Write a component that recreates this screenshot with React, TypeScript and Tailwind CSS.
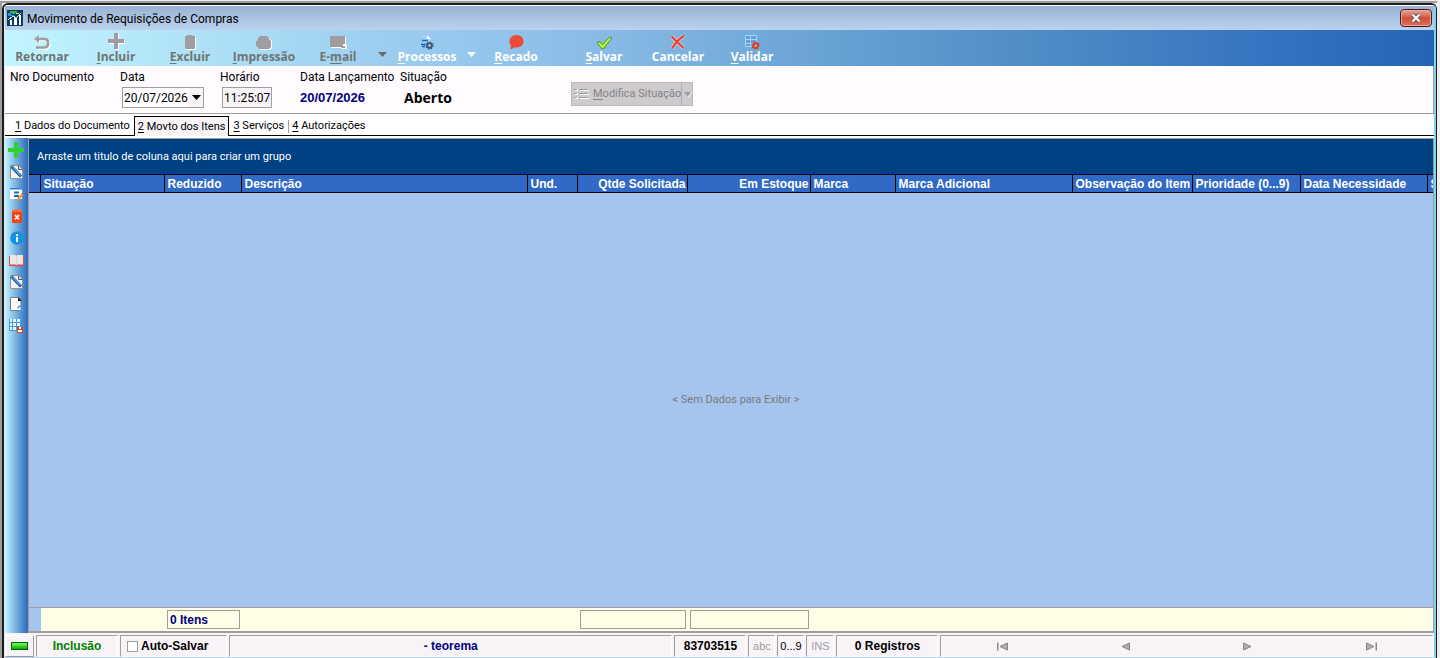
import { useState } from "react";
import type { ReactNode } from "react";
import clsx from "clsx";

const SANS = "font-['Liberation_Sans',Arial,sans-serif]";
const NARROW = "font-['Roboto','Liberation_Sans',sans-serif]";
const HUMANIST = "font-['Open_Sans','Noto_Sans',sans-serif]";

// --- Icons ---

const AppIcon = () => (
  <svg width="16" height="16" viewBox="0 0 16 16" shapeRendering="crispEdges">
    <rect width="16" height="16" fill="#0b3a63" />
    <path d="M3 1h7v2H8v1H5V3H3z" fill="#2fb84a" />
    <path d="M1 3h3v2h3v1H1z" fill="#2a8fe0" />
    <path d="M9 3h3v1H9z" fill="#e8e23a" />
    <path d="M3 10h2v5H3zM7 8h3v7H7zM12 5h2v10h-2z" fill="#fff" />
    <path d="M1 10l5-4 3 2 5-5" stroke="#cfe6f7" fill="none" />
  </svg>
);

const ReturnIcon = () => (
  <svg width="18" height="15" viewBox="0 0 18 15">
    <g transform="translate(1 1)">
      <path d="M6 0v8L1 4z" fill="#fff" />
      <path d="M1 4h11c4 0 4.500 8 0 8.500H4" fill="none" stroke="#fff" strokeWidth="2.600" />
    </g>
    <path d="M6 0v8L1 4z" fill="#a09da1" />
    <path d="M3 4h9c4 0 4.500 8 0 8.500H3" fill="none" stroke="#a09da1" strokeWidth="2.600" />
  </svg>
);

const PlusShape = ({ color, shadow }: { color: string; shadow?: boolean }) => (
  <svg width="17" height="17" viewBox="0 0 17 17" shapeRendering="crispEdges">
    {shadow && <path d="M7 1h4v6h6v4h-6v6H7v-6H1V7h6z" fill="#fff" />}
    <path d="M6 0h4v6h6v4h-6v6H6v-6H0V6h6z" fill={color} />
  </svg>
);

const TrashIcon = () => (
  <svg width="12" height="15" viewBox="0 0 12 15">
    <path d="M4 1h6l1 1 1 1v11l-1 1H3l-1-1V2z" fill="#fff" />
    <path d="M3 0h5l1 1h2v12l-1 1H2l-1-1V1h2z" fill="#a09da1" />
  </svg>
);

const PrinterIcon = () => (
  <svg width="16" height="14" viewBox="0 0 16 14">
    <path d="M5 1h7l2 2 2 2v7l-2 2H4z" fill="#fff" />
    <path d="M4 0h7l2 2v1l2 2v6l-2 2H3l-1-2H1L0 9V6l2-3V2z" fill="#a09da1" />
  </svg>
);

const MailIcon = () => (
  <svg width="17" height="14" viewBox="0 0 17 14">
    <path d="M1 1h15v8l1 1v3h-5l-1-1H1z" fill="#fff" />
    <path d="M0 0h15v8h-2v2h2v2h-3l-1-1H0z" fill="#a09da1" />
  </svg>
);

const Gear = ({ color }: { color: string }) => (
  <g>
    <circle cx="0" cy="0" r="2.300" fill="none" stroke={color} strokeWidth="1.800" />
    <circle cx="0" cy="0" r="3.500" fill="none" stroke={color} strokeWidth="1.300" strokeDasharray="1.400 1.350" />
  </g>
);

const ProcessIcon = () => (
  <svg width="14" height="15" viewBox="0 0 14 15">
    <path d="M3 0h4v4h4v4H3z" fill="#9fd0ff" />
    <path d="M7 0l4 4H7z" fill="#fff" />
    <path d="M2 5.500h6M1 9.500h5M2 11.500h3" stroke="#1668c4" strokeWidth="1.400" />
    <g transform="translate(9.500 10.500)"><Gear color="#44556a" /></g>
  </svg>
);

const BalloonIcon = () => (
  <svg width="15" height="15" viewBox="0 0 15 15">
    <path d="M7.500 0c4.200 0 7 2.800 7 6.300s-2.800 6.200-7 6.200c-.9 0-1.600-.1-2.300-.3C4.200 13.200 3 14 1 14c.8-1 1-2.300.9-3.500C.9 9.300.5 7.900.5 6.300.5 2.800 3.300 0 7.500 0z" fill="#e84b38" />
  </svg>
);

const CheckIcon = () => (
  <svg width="17" height="14" viewBox="0 0 17 14">
    <path d="M1 6.500l3-1 2.500 3L13.500 1l2.500.5L8 12.500H5.500z" fill="#9be31a" stroke="#4f9f27" />
    <path d="M3 7l3 4L14.500 2" stroke="#d9ff8a" fill="none" />
  </svg>
);

const CrossIcon = () => (
  <svg width="16" height="15" viewBox="0 0 16 15">
    <path d="M1.500 1.500l12 11.500M14 .8Q7 5 2 13.500" stroke="#fff" strokeWidth="3.600" fill="none" opacity=".6" />
    <path d="M1.500 1.500l12 11.500M14 .8Q7 5 2 13.500" stroke="#f03a28" strokeWidth="2.300" fill="none" />
  </svg>
);

const ValidateIcon = () => (
  <svg width="15" height="15" viewBox="0 0 15 15">
    <rect x="1" y="1" width="11" height="11" fill="#5f9fe0" />
    <path d="M.5.5h11v11H.5zM5.500.5v11M.5 4.500h11M.5 8.500h11" fill="none" stroke="#a3d4ff" />
    <g transform="translate(10.500 10.500)"><Gear color="#e8381c" /></g>
  </svg>
);

const NoteIcon = () => (
  <svg width="13" height="14" viewBox="0 0 13 14">
    <path d="M.5.5h8l4 4v9H.5z" fill="#f4f4f2" stroke="#8d9199" />
    <path d="M8.500.5v4h4" fill="#d4d8de" stroke="#55585e" />
    <path d="M1.500 1.500l9.500 10" stroke="#1d4f96" strokeWidth="3" />
    <path d="M2.500 2l8 8.500" stroke="#5aa8f2" strokeWidth="1.200" />
  </svg>
);

const EditFormIcon = () => (
  <svg width="14" height="13" viewBox="0 0 14 13">
    <path d="M0 0h12v11H0z" fill="#fff" />
    <path d="M0 0h12v1.500H0z" fill="#2f7fdd" />
    <path d="M4 4.500h5M4 8h5" stroke="#2264b8" strokeWidth="1.800" />
    <path d="M13 6l-6 6.500" stroke="#f0932b" strokeWidth="2.200" />
    <path d="M12 5l1.500 1.500" stroke="#e84b38" strokeWidth="1.500" />
  </svg>
);

const RedTrashIcon = () => (
  <svg width="10" height="14" viewBox="0 0 10 14">
    <path d="M3 0h4v1h3v2H0V1h3z" fill="#ff6a3c" />
    <path d="M0 3h10v10l-1 1H1l-1-1z" fill="#f24412" />
    <path d="M3 6l4 4.500M7 6l-4 4.500" stroke="#fff" strokeWidth="1.600" />
  </svg>
);

const InfoIcon = () => (
  <svg width="14" height="14" viewBox="0 0 14 14">
    <circle cx="7" cy="7" r="6.800" fill="#1292e0" />
    <path d="M6 3h2v2H6zM6 6h2v5H6z" fill="#fff" />
  </svg>
);

const BookIcon = () => (
  <svg width="15" height="13" viewBox="0 0 15 13">
    <path d="M0 2h15v10H8.500l-1 1-1-1H0z" fill="#e04a42" />
    <path d="M1 1h5.500l1 1 1-1H14v9.500H8.500l-1 1-1-1H1z" fill="#ece6e8" />
    <path d="M7.500 2v9" stroke="#ddd4d8" />
  </svg>
);

const PageRefreshIcon = () => (
  <svg width="14" height="15" viewBox="0 0 14 15">
    <path d="M.5.5h8l2.500 3v10H.5z" fill="#fff" stroke="#7b7b7b" />
    <path d="M8 0v4h4L8.500.5z" fill="#222" />
    <path d="M8 11.500a2.500 2.500 0 0 1 4-2M13 11.500a2.500 2.500 0 0 1-4 2" fill="none" stroke="#4f9fe0" strokeWidth="1.700" />
  </svg>
);

const TableSaveIcon = () => (
  <svg width="15" height="14" viewBox="0 0 15 14" shapeRendering="crispEdges">
    <path d="M0 0h12v12H0z" fill="#eaf5ff" />
    <path d="M3 0h1v12H3zM7 0h1v12H7zM0 3h12v1H0zM0 7h12v1H0zM0 11h12v1H0zM11 0h1v12h-1zM0 0h1v12H0z" fill="#3d9be4" />
    <path d="M8 8h6v6H8z" fill="#ea3d1a" />
    <path d="M10 8h2v2h-2zM9 11h4v2H9z" fill="#fff" />
  </svg>
);

const ListIcon = () => (
  <svg width="15" height="12" viewBox="0 0 15 12" shapeRendering="crispEdges">
    <path d="M1 1h3v2H1zM1 5h3v2H1zM1 9h3v2H1zM6 2h9v1H6zM6 6h9v1H6zM6 10h9v1H6z" fill="#fff" />
    <path d="M0 1h3v1H0zM0 5h3v1H0zM0 9h3v1H0zM5 1h9v1H5zM5 5h9v1H5zM5 9h9v1H5z" fill="#a09da1" />
  </svg>
);

const Caret = ({ color }: { color: string }) => (
  <svg width="9" height="5" viewBox="0 0 9 5">
    <path d="M0 0h9L4.500 5z" fill={color} />
  </svg>
);

const NavIcon = ({ flip, bar }: { flip?: boolean; bar?: boolean }) => (
  <svg width="12" height="9" viewBox="0 0 12 9" className={flip ? "-scale-x-100" : undefined}>
    {bar && <path d="M0 .5h1.500v8H0z" fill="#8a878b" />}
    <path d="M10.500 1v7L3 4.500z" fill="#b0aeb1" stroke="#858286" />
  </svg>
);

// --- Data ---

type ToolItem = {
  label: string;
  hotkey?: number;
  icon: ReactNode;
  disabled?: boolean;
  menu?: boolean;
};

const mainTools: ToolItem[] = [
  { label: "Retornar", icon: <ReturnIcon />, disabled: true },
  { label: "Incluir", hotkey: 0, icon: <PlusShape color="#a09da1" shadow />, disabled: true },
  { label: "Excluir", hotkey: 0, icon: <TrashIcon />, disabled: true },
  { label: "Impressão", hotkey: 0, icon: <PrinterIcon />, disabled: true },
  { label: "E-mail", hotkey: 2, icon: <MailIcon />, disabled: true, menu: true },
  { label: "Processos", hotkey: 0, icon: <ProcessIcon />, menu: true },
  { label: "Recado", hotkey: 0, icon: <BalloonIcon /> },
];

const saveTools: ToolItem[] = [
  { label: "Salvar", hotkey: 0, icon: <CheckIcon /> },
  { label: "Cancelar", icon: <CrossIcon /> },
  { label: "Validar", hotkey: 0, icon: <ValidateIcon /> },
];

const tabs = ["1 Dados do Documento", "2 Movto dos Itens", "3 Serviços", "4 Autorizações"];

const sideTools = [
  { label: "Incluir item", icon: <PlusShape color="#2ed12e" /> },
  { label: "Observação", icon: <NoteIcon /> },
  { label: "Alterar item", icon: <EditFormIcon /> },
  { label: "Excluir item", icon: <RedTrashIcon /> },
  { label: "Informações", icon: <InfoIcon /> },
  { label: "Catálogo", icon: <BookIcon /> },
  { label: "Anotações", icon: <NoteIcon /> },
  { label: "Atualizar", icon: <PageRefreshIcon /> },
  { label: "Salvar layout", icon: <TableSaveIcon /> },
];

const columns = [
  { title: "", width: "w-[11px]" },
  { title: "Situação", width: "w-[124px]" },
  { title: "Reduzido", width: "w-[77px]" },
  { title: "Descrição", width: "w-[286px]" },
  { title: "Und.", width: "w-[50px]" },
  { title: "Qtde Solicitada", width: "w-[110px]", right: true },
  { title: "Em Estoque", width: "w-[123px]", right: true },
  { title: "Marca", width: "w-[85px]" },
  { title: "Marca Adicional", width: "w-[177px]" },
  { title: "Observação do Item", width: "w-[120px]" },
  { title: "Prioridade (0...9)", width: "w-[108px]" },
  { title: "Data Necessidade", width: "w-[127px]" },
  { title: "S", width: "" },
];

// --- Pieces ---

const HotLabel = ({ text, at }: { text: string; at?: number }) =>
  at === undefined ? (
    <span>{text}</span>
  ) : (
    <span>
      {text.slice(0, at)}
      <span className="underline underline-offset-2">{text[at]}</span>
      {text.slice(at + 1)}
    </span>
  );

function ToolButton({ item }: { item: ToolItem }) {
  return (
    <>
      <button
        type="button"
        disabled={item.disabled}
        className={clsx(
          "flex h-9 w-[74px] shrink-0 flex-col items-center text-xs leading-[14px] font-bold",
          item.disabled ? "text-[#6f7472]" : "text-white"
        )}
      >
        <span className="flex h-5 items-end justify-center">{item.icon}</span>
        <HotLabel text={item.label} at={item.hotkey} />
      </button>
      {item.menu && (
        <button
          type="button"
          aria-label={`Opções de ${item.label}`}
          disabled={item.disabled}
          className="flex h-9 w-[15px] shrink-0 items-center justify-center pt-3"
        >
          <Caret color={item.disabled ? "#6f6c66" : "#ffffff"} />
        </button>
      )}
    </>
  );
}

function StatusPanel({ className, children }: { className?: string; children?: ReactNode }) {
  return (
    <div
      className={clsx(
        "flex shrink-0 items-center border border-t-[#a09da1] border-r-white border-b-white border-l-[#a09da1]",
        className
      )}
    >
      {children}
    </div>
  );
}

export default function App() {
  const [activeTab, setActiveTab] = useState(1);
  const [date, setDate] = useState("20/07/2026");
  const [time, setTime] = useState("11:25:07");
  const [autoSave, setAutoSave] = useState(false);

  return (
    <div className={clsx("flex min-h-screen flex-col bg-[#f0edf0] pt-px pr-[3px] text-black", SANS)}>
      <div className="flex flex-1 flex-col border-t-2 border-l-2 border-[#a09da1]">
        <div className="flex flex-1 flex-col rounded-t-md border-t-2 border-r border-l-2 border-[#1c1c1c] bg-white">
          <div className="flex flex-1 flex-col rounded-t border-t border-r-2 border-b border-l border-t-white border-r-[#7fd3f2] border-b-[#b8d4f0] border-l-[#dcecf8]">
            {/* Title bar */}
            <header className="flex h-6 items-center gap-1 bg-linear-to-b from-[#98b3d2] to-[#bcd2ee] pl-0.5">
              <AppIcon />
              <h1 className={clsx("flex-1 pt-px text-xs", NARROW)}>Movimento de Requisições de Compras</h1>
              <button
                type="button"
                aria-label="Fechar"
                className="mr-0.5 flex h-[18px] w-8 items-center justify-center rounded-sm border border-[#4b1520] bg-linear-to-b from-[#eba79b] via-[#cf5238] via-50% to-[#d8705a] inset-ring inset-ring-[#e9a89c]"
              >
                <svg width="12" height="10" viewBox="0 0 12 10">
                  <path d="M2.500 1.500l7 7M9.500 1.500l-7 7" stroke="#5c4a5c" strokeWidth="4" />
                  <path d="M2.500 1.500l7 7M9.500 1.500l-7 7" stroke="#fff" strokeWidth="2.400" />
                </svg>
              </button>
            </header>

            {/* Toolbar */}
            <div
              role="toolbar"
              className={clsx(
                "flex h-9 items-start overflow-hidden bg-[linear-gradient(to_right,#c2f5ff,#9ccdf0_27%,#8cbde7_40%,#6fa8d8_54%,#4a88c4_75%,#3574c0_88%,#2464b4)]",
                HUMANIST
              )}
            >
              {mainTools.map((t) => (
                <ToolButton key={t.label} item={t} />
              ))}
              <div className="w-3.5 shrink-0" />
              {saveTools.map((t) => (
                <ToolButton key={t.label} item={t} />
              ))}
            </div>

            {/* Document header */}
            <form
              className={clsx(
                "flex h-12 items-start border-r border-b border-[#a09da1] bg-[#fffbff] pt-1 pl-[5px] text-xs leading-[14px]",
                NARROW
              )}
            >
              <div className="w-[110px]">Nro Documento</div>
              <div className="flex w-[100px] flex-col gap-[3px]">
                <label htmlFor="data">Data</label>
                <div className="ml-0.5 flex h-[21px] w-[82px] border border-[#a09da1] bg-white">
                  <input
                    id="data"
                    value={date}
                    onChange={(e) => setDate(e.target.value)}
                    className="w-[66px] pl-px outline-none"
                  />
                  <button
                    type="button"
                    aria-label="Abrir calendário"
                    className="flex flex-1 items-center justify-center bg-[#f7f3f7]"
                  >
                    <Caret color="#000000" />
                  </button>
                </div>
              </div>
              <div className="flex w-20 flex-col gap-[3px]">
                <label htmlFor="hora">Horário</label>
                <input
                  id="hora"
                  value={time}
                  onChange={(e) => setTime(e.target.value)}
                  className="ml-0.5 h-[21px] w-[50px] border border-[#a09da1] bg-[#f7f3f7] pl-px outline-none"
                />
              </div>
              <div className="flex w-[100px] flex-col gap-[7px] whitespace-nowrap">
                <span>Data Lançamento</span>
                <output className={clsx("text-[13px] leading-[14px] font-bold text-[#000080]", SANS)}>
                  20/07/2026
                </output>
              </div>
              <div className="flex w-[171px] flex-col gap-[7px]">
                <span>Situação</span>
                <output className={clsx("pl-1 text-sm leading-[14px] font-bold", HUMANIST)}>Aberto</output>
              </div>
              <div className="mt-3 flex h-6 w-[122px] border border-[#b9b9b9] bg-[#cecbce] text-[11px] text-[#848184] [text-shadow:1px_1px_#ffffff]">
                <button type="button" disabled className="flex flex-1 items-center gap-1 pl-0.5 whitespace-nowrap">
                  <ListIcon />
                  <HotLabel text="Modifica Situação" at={0} />
                </button>
                <button
                  type="button"
                  disabled
                  aria-label="Opções de situação"
                  className="flex w-3 shrink-0 items-center justify-center border-l border-[#b0adb0]"
                >
                  <svg width="8" height="5" viewBox="0 0 8 5">
                    <path d="M0 0h8L4 5z" fill="#a09da1" />
                    <path d="M8 0L4 5" stroke="#fff" />
                  </svg>
                </button>
              </div>
            </form>

            {/* Tabs */}
            <div
              role="tablist"
              className={clsx("flex h-[22px] items-end border-b border-black bg-white pl-1.5 text-[11px]", NARROW)}
            >
              {tabs.map((t, i) => (
                <button
                  key={t}
                  type="button"
                  role="tab"
                  aria-selected={i === activeTab}
                  onClick={() => setActiveTab(i)}
                  className={clsx(
                    "flex items-center whitespace-nowrap",
                    i === activeTab ? "-mb-px h-5 border-x border-t border-black bg-[#f7f3f7] px-[3px] pt-px" : "h-[17px]",
                    i !== activeTab && (i === 3 ? "pr-1" : "px-1")
                  )}
                >
                  {i === 3 && i !== activeTab && <span className="mr-[3px] h-[13px] w-px bg-[#a09da1]" />}
                  <HotLabel text={t} at={0} />
                </button>
              ))}
            </div>

            <main className="mt-0.5 flex flex-1">
              {/* Side toolbar */}
              <nav className="flex w-[23px] shrink-0 flex-col items-center bg-linear-to-r from-[#c2f5ff] to-[#2c68b8] pt-px">
                {sideTools.map((t) => (
                  <button
                    key={t.label}
                    type="button"
                    aria-label={t.label}
                    className="flex h-[22px] w-full items-center justify-center"
                  >
                    {t.icon}
                  </button>
                ))}
              </nav>

              {/* Grid */}
              <section className="flex min-w-0 flex-1 flex-col overflow-hidden border-t border-r border-b-2 border-l border-[#a09da1] bg-[#a5c5ef]">
                <div className={clsx("flex h-[35px] items-center bg-[#004184] pt-0.5 pl-2 text-[11px] text-white", NARROW)}>
                  Arraste um titulo de coluna aqui para criar um grupo
                </div>
                <table className="w-full table-fixed border-y border-black bg-[#3169c6] text-xs text-white">
                  <thead>
                    <tr className="h-[17px]">
                      {columns.map((c) => (
                        <th
                          key={c.title}
                          className={clsx(
                            "border-r border-black p-0 pt-px leading-4 font-bold whitespace-nowrap last:border-r-0",
                            c.right ? "pr-px text-right" : "pl-[3px] text-left",
                            c.width
                          )}
                        >
                          {c.title}
                        </th>
                      ))}
                    </tr>
                  </thead>
                </table>
                <div
                  className={clsx(
                    "flex flex-1 items-center justify-center pt-px pl-2.5 text-[11px] text-[#7b797b]",
                    NARROW
                  )}
                >
                  &lt; Sem Dados para Exibir &gt;
                </div>
                <div className="flex h-6 shrink-0 items-center border-t border-[#a09da1] bg-[#ffffe7] text-xs font-bold text-[#000080]">
                  <div className="h-full w-3 shrink-0 bg-[#a5c5ef]" />
                  <div className="w-[124px] shrink-0" />
                  <div className="w-[77px] shrink-0 px-0.5">
                    <div className="h-[19px] border border-[#a09da1] pl-0.5 leading-[18px]">0 Itens</div>
                  </div>
                  <div className="w-[336px] shrink-0" />
                  <div className="w-[110px] shrink-0 px-0.5">
                    <div className="h-[19px] border border-[#a09da1]" />
                  </div>
                  <div className="w-[123px] shrink-0 px-0.5">
                    <div className="h-[19px] border border-[#a09da1]" />
                  </div>
                </div>
              </section>
            </main>

            {/* Status bar */}
            <footer className="flex h-6 gap-0.5 bg-[#f7f3f7] pt-0.5 pr-px text-xs">
              <div className="flex w-[29px] items-center justify-center border border-t-white border-r-[#a09da1] border-b-[#a09da1] border-l-white">
                <span className="h-2 w-[17px] border border-[#006400] bg-linear-to-b from-[#6dff5a] to-[#00a800]" />
              </div>
              <StatusPanel className="w-[82px] justify-center font-bold text-[#008000]">Inclusão</StatusPanel>
              <StatusPanel className="w-[107px] pl-1.5 font-bold">
                <label className="flex items-center gap-[3px]">
                  <input
                    type="checkbox"
                    checked={autoSave}
                    onChange={(e) => setAutoSave(e.target.checked)}
                    className="size-[11px] appearance-none border border-[#a09da1] bg-white checked:bg-[#000080]"
                  />
                  Auto-Salvar
                </label>
              </StatusPanel>
              <StatusPanel className="flex-9 justify-center font-bold text-[#000080]">- teorema</StatusPanel>
              <StatusPanel className="w-[72px] justify-center font-bold">83703515</StatusPanel>
              <StatusPanel className="w-[27px] justify-center text-[11px] text-[#a09da1]">abc</StatusPanel>
              <StatusPanel className="w-[27px] justify-center text-[11px]">0...9</StatusPanel>
              <StatusPanel className="w-7 justify-center text-[11px] text-[#a09da1]">INS</StatusPanel>
              <StatusPanel className="w-[102px] justify-center font-bold">0 Registros</StatusPanel>
              <StatusPanel className="flex-10">
                <button type="button" aria-label="Primeiro" className="flex flex-1 justify-center"><NavIcon bar /></button>
                <button type="button" aria-label="Anterior" className="flex flex-1 justify-center"><NavIcon /></button>
                <button type="button" aria-label="Próximo" className="flex flex-1 justify-center"><NavIcon flip /></button>
                <button type="button" aria-label="Último" className="flex flex-1 justify-center"><NavIcon flip bar /></button>
              </StatusPanel>
            </footer>
          </div>
        </div>
      </div>
    </div>
  );
}
